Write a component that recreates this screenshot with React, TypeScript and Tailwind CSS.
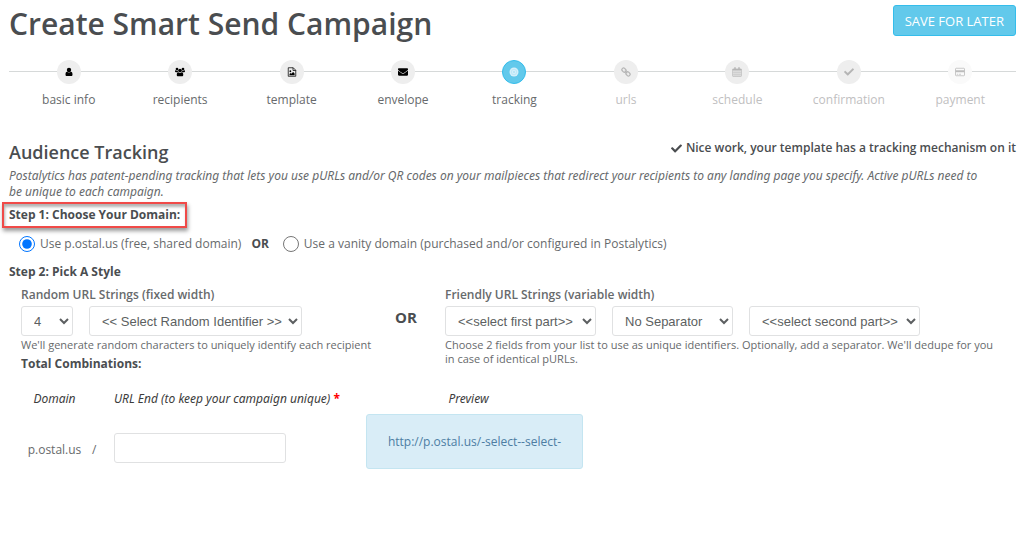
import React from 'react';
import { FaCheck, FaEnvelope } from 'react-icons/fa';
import clsx from 'clsx';

type StepState = 'done' | 'active' | 'todo' | 'last';

interface IconProps {
  className?: string;
}

interface Step {
  label: string;
  icon: React.ComponentType<IconProps>;
  state: StepState;
}

const steps: Step[] = [
  { label: 'basic info', icon: UserIcon, state: 'done' },
  { label: 'recipients', icon: GroupIcon, state: 'done' },
  { label: 'template', icon: PictureFileIcon, state: 'done' },
  { label: 'envelope', icon: FaEnvelope, state: 'done' },
  { label: 'tracking', icon: TargetIcon, state: 'active' },
  { label: 'urls', icon: ChainIcon, state: 'todo' },
  { label: 'schedule', icon: CalendarIcon, state: 'todo' },
  { label: 'confirmation', icon: FaCheck, state: 'todo' },
  { label: 'payment', icon: CardIcon, state: 'last' },
];

const circleStyles: Record<StepState, string> = {
  done: 'bg-[#eeeeee] text-black',
  active: 'border border-[#34bdeb] bg-[#62c9eb] text-[#d5f0fb]',
  todo: 'bg-[#eeeeee] text-[#b5b5b5]',
  last: 'bg-[#fafafa] text-[#bcbcbc]',
};

export default function App() {
  const [domain, setDomain] = React.useState('shared');
  const [urlEnd, setUrlEnd] = React.useState('');

  return (
    <main className="min-h-screen bg-white pr-2 pl-[9px] font-['Open_Sans','Noto_Sans',sans-serif] text-[12px] leading-4 text-[#676a6c]">
      <header className="flex items-start justify-between">
        <h1 className="pt-1 text-[30px] leading-10 font-semibold text-[#4a4d50]">Create Smart Send Campaign</h1>
        <button
          type="button"
          className="mt-[5px] h-[31px] rounded-[3px] border border-[#34bdeb] bg-[#62c9eb] px-[11px] text-[13px] leading-5 text-white"
        >
          SAVE FOR LATER
        </button>
      </header>

      <StepBar />

      <section className="mt-8">
        <div className="flex items-start justify-between">
          <h2 className="text-[18px] leading-6 font-semibold text-[#4a4d50]">Audience Tracking</h2>
          <p className="flex items-center gap-1 font-semibold text-[#4a4d50]">
            <FaCheck className="size-[11px]" />
            Nice work, your template has a tracking mechanism on it
          </p>
        </div>
        <p className="mt-1 pr-6 font-['Noto_Sans',sans-serif] italic">
          Postalytics has patent-pending tracking that lets you use pURLs and/or QR codes on your mailpieces that
          redirect your recipients to any landing page you specify. Active pURLs need to be unique to each campaign.
        </p>

        <h3 className="mt-[2px] -ml-[7px] w-fit border-2 border-[#f04a48] px-[5px] py-[2px] leading-[18px] font-bold text-[#4a4d50] shadow-[1px_3px_4px_rgba(0,0,0,0.4),inset_1px_3px_3px_rgba(0,0,0,0.3)]">
          Step 1: Choose Your Domain:
        </h3>

        <div className="mt-2 flex items-center pl-[10px]">
          <RadioOption
            label="Use p.ostal.us (free, shared domain)"
            checked={domain === 'shared'}
            onChange={() => setDomain('shared')}
          />
          <span className="mr-[14px] ml-[10px] font-bold text-[#4a4d50]">OR</span>
          <RadioOption
            label="Use a vanity domain (purchased and/or configured in Postalytics)"
            checked={domain === 'vanity'}
            onChange={() => setDomain('vanity')}
          />
        </div>

        <h3 className="mt-3 font-bold text-[#4a4d50]">Step 2: Pick A Style</h3>

        <div className="mt-[7px] flex pl-3">
          <div className="w-[374px] shrink-0">
            <h4 className="font-semibold">Random URL Strings (fixed width)</h4>
            <div className="mt-[3px] flex gap-4">
              <Dropdown label="Length" option="4" className="w-[52px]" />
              <Dropdown label="Random identifier" option="<< Select Random Identifier >>" className="w-[213px]" />
            </div>
            <p className="mt-[2px] text-[11px] leading-[14px]">
              We'll generate random characters to uniquely identify each recipient
            </p>
            <p className="mt-1 font-bold text-[#4a4d50]">Total Combinations:</p>
          </div>
          <p className="mt-5 w-[50px] shrink-0 text-[15px] leading-5 font-bold text-[#4a4d50]">OR</p>
          <div className="min-w-0 grow">
            <h4 className="font-semibold">Friendly URL Strings (variable width)</h4>
            <div className="mt-[3px] flex gap-4">
              <Dropdown label="First part" option="<<select first part>>" className="w-[151px]" />
              <Dropdown label="Separator" option="No Separator" className="w-[121px]" />
              <Dropdown label="Second part" option="<<select second part>>" className="w-[171px]" />
            </div>
            <p className="mt-[2px] pr-4 text-[11px] leading-[14px]">
              Choose 2 fields from your list to use as unique identifiers. Optionally, add a separator. We'll dedupe for
              you in case of identical pURLs.
            </p>
          </div>
        </div>

        <table className="mt-[19px] border-collapse">
          <thead>
            <tr className="font-['Noto_Sans',sans-serif] text-[#3c3c3c] italic">
              <th className="w-[83px] pl-2 font-normal">Domain</th>
              <th className="w-[22px]" aria-label="Path" />
              <th className="w-[252px] text-left font-normal">
                <label htmlFor="url-end">URL End (to keep your campaign unique)</label>{' '}
                <span className="font-bold text-[#ff0000] not-italic">*</span>
              </th>
              <th className="w-[217px] pr-3 font-normal">Preview</th>
            </tr>
          </thead>
          <tbody>
            <tr>
              <td className="pt-4 pl-2 text-center">p.ostal.us</td>
              <td className="pt-4">/</td>
              <td className="pt-3">
                <input
                  id="url-end"
                  type="text"
                  value={urlEnd}
                  onChange={(e) => setUrlEnd(e.target.value)}
                  className="block h-[30px] w-[172px] rounded-[3px] border border-[#e0e1e2] px-3"
                />
              </td>
              <td className="py-[7px]">
                <output
                  htmlFor="url-end"
                  className="flex h-[55px] w-[217px] items-center justify-center rounded-[3px] border border-[#c4e5f1] bg-[#d9edf7] text-[#4d7da3]"
                >
                  http://p.ostal.us/-select--select-{urlEnd}
                </output>
              </td>
            </tr>
          </tbody>
        </table>
      </section>
    </main>
  );
}

function StepBar() {
  return (
    <nav aria-label="Campaign steps" className="relative mt-4 pl-1">
      <div className="absolute inset-x-0 top-[11px] h-px bg-[#d6d9d9]" />
      <ol className="grid grid-cols-9">
        {steps.map(({ label, icon: Icon, state }) => (
          <li
            key={label}
            aria-current={state === 'active' ? 'step' : undefined}
            className="relative flex flex-col items-center gap-2"
          >
            <span className={clsx('flex size-6 items-center justify-center rounded-full', circleStyles[state])}>
              <Icon className="size-[10px]" />
            </span>
            <span className={state === 'todo' || state === 'last' ? 'text-[#bfc0c1]' : ''}>{label}</span>
          </li>
        ))}
      </ol>
    </nav>
  );
}

function RadioOption({ label, checked, onChange }: { label: string; checked: boolean; onChange: () => void }) {
  return (
    <label className="flex items-center gap-[5px]">
      <input type="radio" name="domain" checked={checked} onChange={onChange} className="size-4 accent-[#0075ff]" />
      {label}
    </label>
  );
}

function Dropdown({ label, option, className }: { label: string; option: string; className: string }) {
  return (
    <select
      aria-label={label}
      className={clsx(
        "h-[30px] rounded-[3px] border border-[#e0e1e2] bg-white pl-2 font-['Liberation_Sans',Arial,sans-serif] text-[13px] text-[#5c5f61]",
        className,
      )}
    >
      <option>{option}</option>
    </select>
  );
}

function UserIcon({ className }: IconProps) {
  return (
    <svg viewBox="0 0 20 20" fill="currentColor" className={className}>
      <circle cx="10" cy="6" r="4.4" />
      <path d="M6 9.500c2.500 2 5.500 2 8 0 2.200.3 3 2.500 3 5.500 0 2-1 3-2.500 3h-9C4 18 3 17 3 15c0-3 .8-5.200 3-5.500z" />
    </svg>
  );
}

function GroupIcon({ className }: IconProps) {
  return (
    <svg viewBox="0 0 20 20" fill="currentColor" className={className}>
      <circle cx="4" cy="4" r="2.700" />
      <circle cx="16" cy="4" r="2.700" />
      <circle cx="10" cy="7" r="3.700" />
      <path d="M1.500 6.500C3 7.500 4.500 7.500 5.500 7c0 1.500.4 2.500 1 3.300H2C.8 10.300 0 9.800 0 8.800c0-1.200.6-2.300 1.500-2.300zM18.500 6.500c-1.500 1-3 1-4 .5 0 1.500-.4 2.500-1 3.300H18c1.200 0 2-.5 2-1.500 0-1.200-.6-2.300-1.500-2.300z" />
      <path d="M6.500 10.500c2 1.800 5 1.800 7 0 2 .3 3 2.300 3 5 0 2-1 3-2.700 3H6.200c-1.700 0-2.700-1-2.700-3 0-2.700 1-4.700 3-5z" />
    </svg>
  );
}

function PictureFileIcon({ className }: IconProps) {
  return (
    <svg viewBox="0 0 20 20" fill="currentColor" className={className}>
      <path
        d="M2.500 1.500h10l5 5v12h-15zM12 1.500V7h5.500"
        fill="none"
        stroke="currentColor"
        strokeWidth="1.500"
        strokeLinejoin="round"
      />
      <circle cx="6.700" cy="8.500" r="1.800" />
      <path d="M5 16.300v-2.500l1.800-1.800 1.700 1.700 3.700-3.900 3 3v3.500z" />
    </svg>
  );
}

function TargetIcon({ className }: IconProps) {
  return (
    <svg viewBox="0 0 20 20" className={className}>
      <circle cx="10" cy="10" r="9" fill="currentColor" />
      <circle cx="10" cy="10" r="5.500" fill="none" stroke="#aee2f5" strokeWidth="1.200" />
      <circle cx="10" cy="10" r="1.800" fill="#aee2f5" />
    </svg>
  );
}

function ChainIcon({ className }: IconProps) {
  return (
    <svg viewBox="0 0 20 20" fill="none" stroke="currentColor" strokeWidth="2.400" className={className}>
      <rect x="1.500" y="3" width="9" height="6.500" rx="3" transform="rotate(45 6 6.250)" />
      <rect x="9.500" y="10.500" width="9" height="6.500" rx="3" transform="rotate(45 14 13.750)" />
      <path d="M7.500 7.500l5 5" />
    </svg>
  );
}

function CalendarIcon({ className }: IconProps) {
  return (
    <svg viewBox="0 0 20 20" fill="none" stroke="currentColor" className={className}>
      <path d="M1.500 4h17v14.500h-17z" strokeWidth="1.600" strokeLinejoin="round" />
      <path d="M1.500 5.500h17" strokeWidth="3" />
      <path d="M6 .5V6M14 .5V6" strokeWidth="3" />
      <path d="M1.500 10.500h17M1.500 14.500h17M6 7v11.500M10 7v11.500M14 7v11.500" strokeWidth="1" />
    </svg>
  );
}

function CardIcon({ className }: IconProps) {
  return (
    <svg viewBox="0 0 20 20" fill="none" stroke="currentColor" className={className}>
      <rect x="1" y="2.500" width="18" height="15" rx="1.500" strokeWidth="1.600" />
      <path d="M1 8.500h18" strokeWidth="4" />
      <path d="M3.500 14.500h3M8 14.500h4" strokeWidth="1.500" />
    </svg>
  );
}
